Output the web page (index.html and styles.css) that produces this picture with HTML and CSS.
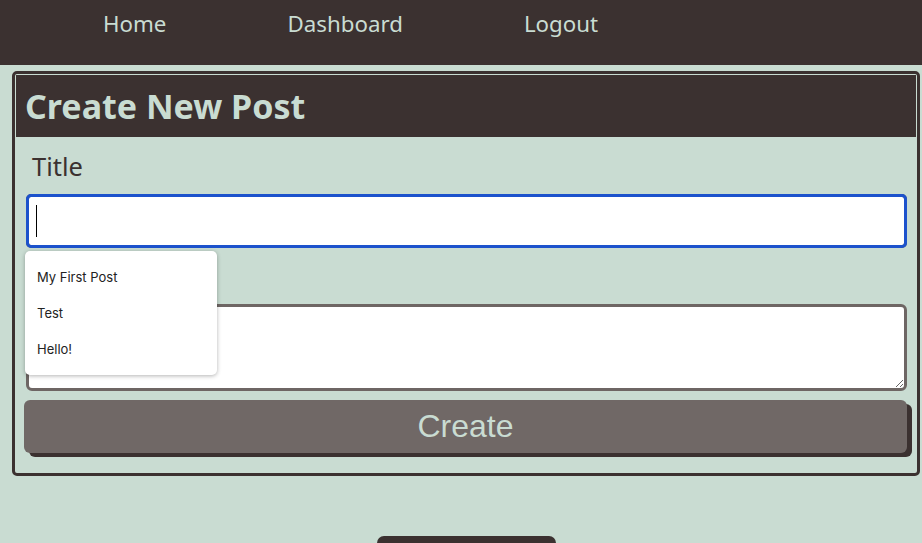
FILE: index.html
```html
<!DOCTYPE html>
<html lang="en">
<head>
<meta charset="utf-8">
<title>Create New Post</title>
<link rel="stylesheet" href="styles.css">
</head>
<body>
<nav class="nav">
  <a class="nav-link" href="#">Home</a>
  <a class="nav-link" href="#">Dashboard</a>
  <a class="nav-link" href="#">Logout</a>
</nav>
<main class="card">
  <header class="card-header">
    <h1 class="card-title">Create New Post</h1>
  </header>
  <form class="form">
    <label class="label" for="title">Title</label>
    <div class="field">
      <input class="input" id="title" type="text">
      <span class="caret"></span>
      <ul class="suggest">
        <li class="suggest-item">My First Post</li>
        <li class="suggest-item">Test</li>
        <li class="suggest-item">Hello!</li>
      </ul>
    </div>
    <textarea class="textarea" id="content" aria-label="Content"></textarea>
    <button class="btn" type="button">Create</button>
  </form>
</main>
<footer class="footer">
  <div class="footer-block"></div>
</footer>
</body>
</html>
```
FILE: styles.css
```css
* { box-sizing: border-box; }
html, body { margin: 0; padding: 0; }
body {
  background: #c9dcd2;
  font-family: "Noto Sans", "Open Sans", sans-serif;
  color: #3b3130;
  height: 543px;
  overflow: hidden;
}
.nav {
  background: #3b3130;
  height: 65px;
  display: flex;
  align-items: flex-start;
  padding: 8px 0 0 103px;
  gap: 121px;
}
.nav-link {
  color: #c9dcd2;
  text-decoration: none;
  font-size: 22.3px;
  line-height: 32px;
}
.card {
  margin: 6px 2px 0 12px;
  border: 3px solid #3b3130;
  border-radius: 5px;
  padding: 1px;
}
.card-header {
  background: #3b3130;
  height: 62px;
  padding: 0 9px;
  display: flex;
  align-items: center;
}
.card-title {
  margin: 0;
  color: #c9dcd2;
  font-size: 34px;
  font-weight: 700;
  line-height: 40px;
}
.form {
  padding: 12px 9px 19px 8px;
  display: flex;
  flex-direction: column;
}
.label {
  font-size: 25.5px;
  line-height: 34px;
  padding-left: 8px;
  margin-bottom: 11px;
}
.field {
  position: relative;
  margin: 0 0 56px 2px;
}
.input {
  display: block;
  width: 100%;
  height: 54px;
  border: 3px solid #6e6664;
  border-radius: 5px;
  outline: 3px solid #1c52cc;
  outline-offset: -3px;
  background: #fff;
  font-size: 20px;
  padding: 0 10px;
}
.caret {
  position: absolute;
  left: 10px;
  top: 11px;
  width: 1px;
  height: 32px;
  background: #000;
}
.suggest {
  position: absolute;
  left: -1px;
  top: 57px;
  width: 192px;
  margin: 0;
  padding: 8px 0;
  list-style: none;
  background: #fff;
  border-radius: 5px;
  box-shadow: 0 1px 4px rgba(0, 0, 0, 0.3);
  z-index: 2;
}
.suggest-item {
  height: 36px;
  line-height: 36px;
  padding-left: 12px;
  font-family: Inter, "Noto Sans", sans-serif;
  font-size: 13px;
  color: #222;
}
.textarea {
  display: block;
  margin: 0 0 9px 2px;
  height: 87px;
  border: 3px solid #6e6664;
  border-radius: 6px;
  background: #fff;
  resize: vertical;
}
.btn {
  display: block;
  width: 100%;
  height: 53px;
  border: 0;
  border-radius: 6px;
  background: #706866;
  color: #c9dcd2;
  font-family: "Liberation Sans", Arial, sans-serif;
  font-size: 32px;
  box-shadow: 5px 4px 0 #3b3130;
  padding: 0;
}
.footer {
  margin: 60px 2px 0 12px;
  display: flex;
  justify-content: center;
}
.footer-block {
  width: 179px;
  height: 7px;
  background: #3b3130;
  border-radius: 7px 7px 0 0;
}
```
